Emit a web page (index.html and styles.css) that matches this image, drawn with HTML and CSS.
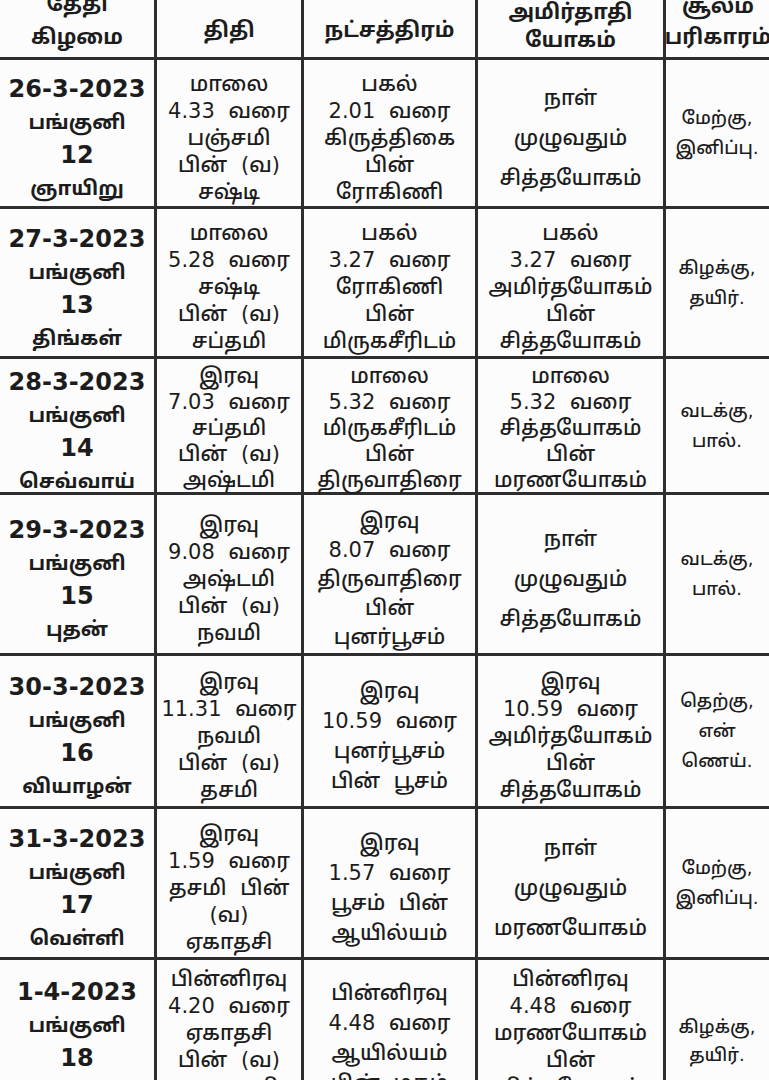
FILE: index.html
```html
<!DOCTYPE html>
<html lang="ta">
<head>
<meta charset="utf-8">
<title>பஞ்சாங்கம்</title>
<link rel="stylesheet" href="styles.css">
</head>
<body>
<div class="page">
  <div class="grid">
    <div class="cell head h-date"><span>தேதி</span><span>கிழமை</span></div>
    <div class="cell head one"><span>திதி</span></div>
    <div class="cell head one"><span>நட்சத்திரம்</span></div>
    <div class="cell head h-yoga"><span>அமிர்தாதி</span><span>யோகம்</span></div>
    <div class="cell head h-soolam"><span>சூலம்</span><span>பரிகாரம்</span></div>

    <div class="cell date"><span class="num">26-3-2023</span><span>பங்குனி</span><span class="num">12</span><span>ஞாயிறு</span></div>
    <div class="cell l5"><span>மாலை</span><span>4.33 வரை</span><span>பஞ்சமி</span><span>பின் (வ)</span><span>சஷ்டி</span></div>
    <div class="cell l5"><span>பகல்</span><span>2.01 வரை</span><span>கிருத்திகை</span><span>பின்</span><span>ரோகிணி</span></div>
    <div class="cell l3"><span>நாள்</span><span>முழுவதும்</span><span>சித்தயோகம்</span></div>
    <div class="cell l2"><span>மேற்கு,</span><span>இனிப்பு.</span></div>

    <div class="cell date"><span class="num">27-3-2023</span><span>பங்குனி</span><span class="num">13</span><span>திங்கள்</span></div>
    <div class="cell l5"><span>மாலை</span><span>5.28 வரை</span><span>சஷ்டி</span><span>பின் (வ)</span><span>சப்தமி</span></div>
    <div class="cell l5"><span>பகல்</span><span>3.27 வரை</span><span>ரோகிணி</span><span>பின்</span><span>மிருகசீரிடம்</span></div>
    <div class="cell l5"><span>பகல்</span><span>3.27 வரை</span><span>அமிர்தயோகம்</span><span>பின்</span><span>சித்தயோகம்</span></div>
    <div class="cell l2"><span>கிழக்கு,</span><span>தயிர்.</span></div>

    <div class="cell date"><span class="num">28-3-2023</span><span>பங்குனி</span><span class="num">14</span><span>செவ்வாய்</span></div>
    <div class="cell l5 tight"><span>இரவு</span><span>7.03 வரை</span><span>சப்தமி</span><span>பின் (வ)</span><span>அஷ்டமி</span></div>
    <div class="cell l5 tight"><span>மாலை</span><span>5.32 வரை</span><span>மிருகசீரிடம்</span><span>பின்</span><span>திருவாதிரை</span></div>
    <div class="cell l5 tight"><span>மாலை</span><span>5.32 வரை</span><span>சித்தயோகம்</span><span>பின்</span><span>மரணயோகம்</span></div>
    <div class="cell l2"><span>வடக்கு,</span><span>பால்.</span></div>

    <div class="cell date"><span class="num">29-3-2023</span><span>பங்குனி</span><span class="num">15</span><span>புதன்</span></div>
    <div class="cell l5"><span>இரவு</span><span>9.08 வரை</span><span>அஷ்டமி</span><span>பின் (வ)</span><span>நவமி</span></div>
    <div class="cell l5 wide"><span>இரவு</span><span>8.07 வரை</span><span>திருவாதிரை</span><span>பின்</span><span>புனர்பூசம்</span></div>
    <div class="cell l3"><span>நாள்</span><span>முழுவதும்</span><span>சித்தயோகம்</span></div>
    <div class="cell l2"><span>வடக்கு,</span><span>பால்.</span></div>

    <div class="cell date"><span class="num">30-3-2023</span><span>பங்குனி</span><span class="num">16</span><span>வியாழன்</span></div>
    <div class="cell l5"><span>இரவு</span><span>11.31 வரை</span><span>நவமி</span><span>பின் (வ)</span><span>தசமி</span></div>
    <div class="cell l4"><span>இரவு</span><span>10.59 வரை</span><span>புனர்பூசம்</span><span>பின் பூசம்</span></div>
    <div class="cell l5"><span>இரவு</span><span>10.59 வரை</span><span>அமிர்தயோகம்</span><span>பின்</span><span>சித்தயோகம்</span></div>
    <div class="cell l2"><span>தெற்கு,</span><span>என்</span><span>ணெய்.</span></div>

    <div class="cell date"><span class="num">31-3-2023</span><span>பங்குனி</span><span class="num">17</span><span>வெள்ளி</span></div>
    <div class="cell l5"><span>இரவு</span><span>1.59 வரை</span><span>தசமி பின்</span><span>(வ)</span><span>ஏகாதசி</span></div>
    <div class="cell l4"><span>இரவு</span><span>1.57 வரை</span><span>பூசம் பின்</span><span>ஆயில்யம்</span></div>
    <div class="cell l3"><span>நாள்</span><span>முழுவதும்</span><span>மரணயோகம்</span></div>
    <div class="cell l2"><span>மேற்கு,</span><span>இனிப்பு.</span></div>

    <div class="cell date last"><span class="num">1-4-2023</span><span>பங்குனி</span><span class="num">18</span><span>சனி</span></div>
    <div class="cell l5 last"><span>பின்னிரவு</span><span>4.20 வரை</span><span>ஏகாதசி</span><span>பின் (வ)</span><span>துவாதசி</span></div>
    <div class="cell l4 last"><span>பின்னிரவு</span><span>4.48 வரை</span><span>ஆயில்யம்</span><span>பின் மகம்</span></div>
    <div class="cell l5 last"><span>பின்னிரவு</span><span>4.48 வரை</span><span>மரணயோகம்</span><span>பின்</span><span>சித்தயோகம்</span></div>
    <div class="cell l2 last"><span>கிழக்கு,</span><span>தயிர்.</span></div>
  </div>
</div>
</body>
</html>
```

FILE: styles.css
```css
html, body {
  margin: 0;
  padding: 0;
  background: #fcfcfc;
}
.page {
  width: 769px;
  height: 1080px;
  overflow: hidden;
}
.grid {
  display: grid;
  grid-template-columns: 154px 144px 171px 185px 110px;
  grid-template-rows: 82px 146px 147px 133px 158px 150px 148px 160px;
  gap: 3px;
  background: #2e2e2e;
  margin-top: -25px;
  width: 776px;
  font-family: "DejaVu Sans", "Noto Sans Tamil", sans-serif;
  color: #1c1c1c;
}
.cell {
  background: #fcfcfc;
  display: flex;
  flex-direction: column;
  align-items: center;
  justify-content: center;
  text-align: center;
  font-size: 21px;
  font-weight: 500;
  line-height: 27px;
  word-spacing: 7px;
  white-space: nowrap;
  padding-top: 10px;
  box-sizing: border-box;
}
.cell span { display: block; }
.head {
  font-weight: bold;
  font-size: 21px;
  line-height: 30px;
  word-spacing: 0;
  justify-content: flex-end;
  padding: 0 0 4px;
}
.head.h-date { line-height: 33px; padding-bottom: 3px; }
.head.h-yoga { line-height: 28px; padding-bottom: 3px; }
.head.h-soolam { line-height: 31px; padding: 0 6px 4px 0; }
.head.one { justify-content: center; padding: 28px 0 0; }
.date {
  font-weight: bold;
  font-size: 20px;
  line-height: 33px;
  padding-top: 12px;
}
.date .num {
  font-size: 24px;
}
.l5.tight { line-height: 26px; padding-top: 5px; }
.l5.wide { line-height: 29px; }
.l4 { line-height: 30px; }
.l3 { line-height: 40px; }
.l2 {
  font-size: 18px;
  line-height: 30px;
  word-spacing: 0;
  padding: 0 8px 0 0;
}
.last { justify-content: flex-start; padding-top: 6px; }
.date.last { padding-top: 16px; }
.l4.last { padding-top: 18px; }
.l2.last { padding-top: 53px; line-height: 28px; }
```
